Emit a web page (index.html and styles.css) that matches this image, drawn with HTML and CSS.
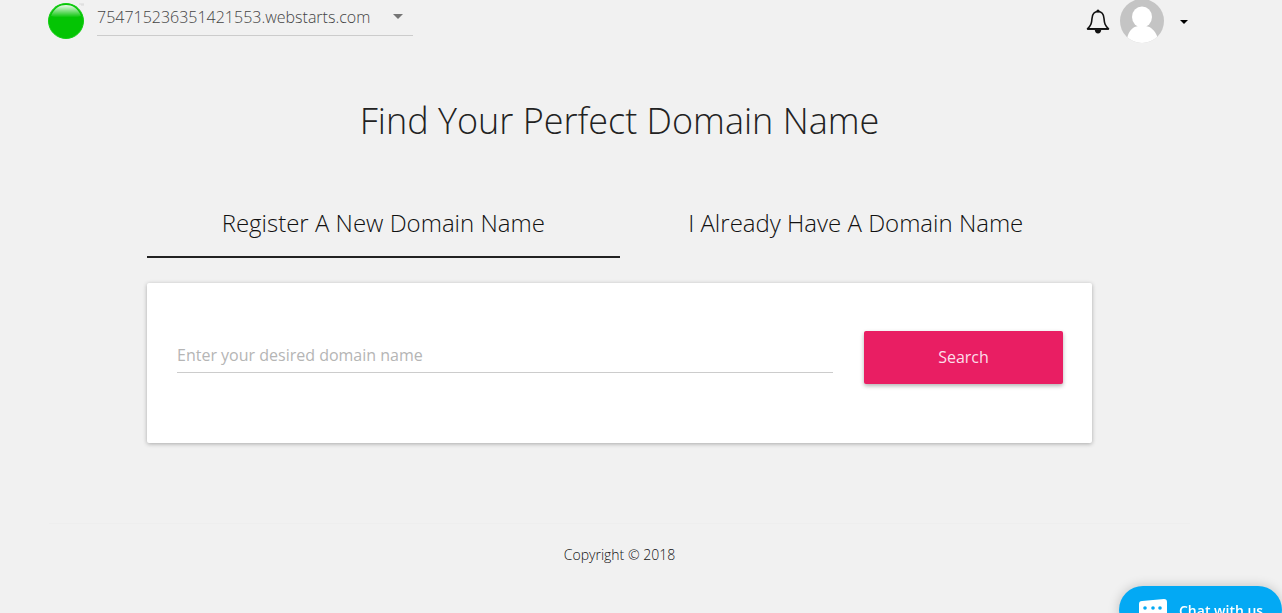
FILE: index.html
```
<!DOCTYPE html>
<html lang="en">
<head>
<meta charset="utf-8">
<title>Find Your Perfect Domain Name</title>
<link rel="stylesheet" href="styles.css">
</head>
<body>
<header class="topbar">
  <svg class="status" viewBox="0 0 38 40" role="img" aria-label="Online">
    <defs>
      <linearGradient id="shine" x1="0" y1="0" x2="0" y2="1"><stop offset="0" stop-color="#fff" stop-opacity=".92"/><stop offset="1" stop-color="#fff" stop-opacity="0"/></linearGradient>
    </defs>
    <circle cx="19" cy="21" r="17.5" fill="#04c404" stroke="#12cf12"/>
    <path d="M4 16C7 8 13 5 19 5s12 3 15 11c-4 2-26 2-30 0z" fill="url(#shine)"/>
    <path d="M32 4h5M34 5h3" stroke="#d9d9d9"/>
  </svg>
  <div class="site-picker">
    <select class="site" aria-label="Site"><option>754715236351421553.webstarts.com</option></select>
    <svg class="caret" viewBox="0 0 10 5" aria-hidden="true"><path d="M0 0h10L5 5z"/></svg>
  </div>
  <div class="account">
    <button class="icon-button" type="button" aria-label="Notifications"><svg class="bell" viewBox="0 0 24 26" aria-hidden="true"><circle cx="12" cy="3" r="1.600" fill="#111"/><path d="M12 3.500C8 3.500 6.300 6.500 6 10.500 5.600 15.500 5 17.500 1.500 20.800h21C19 17.500 18.400 15.500 18 10.500 17.700 6.500 16 3.500 12 3.500z" fill="none" stroke="#111" stroke-width="1.600" stroke-linejoin="round"/><path d="M1.200 21h21.600" stroke="#111" stroke-width="1.800"/><path d="M8.800 22h6.400c0 2-1.400 3.400-3.200 3.400S8.800 24 8.800 22z" fill="#111"/></svg></button>
    <button class="icon-button profile" type="button" aria-label="Account"><svg class="avatar" viewBox="0 0 44 44" aria-hidden="true"><defs><clipPath id="round"><circle cx="22" cy="21" r="22"/></clipPath></defs><g clip-path="url(#round)"><path fill="#c4c4c4" d="M0 0h44v44H0z"/><ellipse cx="22" cy="17" rx="10" ry="10.500" fill="#fff"/><path fill="#fff" d="M6 44c1-8 3-13 7-16 2-1.500 4-2 9-2s7 .5 9 2c4 3 7 8 8 16z"/></g></svg><svg class="small-caret" viewBox="0 0 8 4" aria-hidden="true"><path d="M0 0h8L4 4z"/></svg></button>
  </div>
</header>
<main class="content">
  <h1>Find Your Perfect Domain Name</h1>
  <nav class="tabs"><a class="tab active" href="#register">Register A New Domain Name</a><a class="tab" href="#existing">I Already Have A Domain Name</a></nav>
  <form class="card" id="register">
    <input class="domain" type="text" aria-label="Domain name" placeholder="Enter your desired domain name">
    <button class="search" type="button">Search</button>
  </form>
</main>
<footer class="footer">Copyright © 2018</footer>
<button class="chat" type="button"><svg class="bubble" viewBox="0 0 28 24" aria-hidden="true"><path fill="#fff" d="M3 2L25 0q3 0 3 3v13q0 3-3 3H10l-6 5v-5H3q-3 0-3-3V5q0-3 3-3z"/><g fill="#03a9f4"><circle cx="6" cy="9" r="1.800"/><circle cx="14" cy="9" r="1.800"/><circle cx="21" cy="9" r="1.800"/></g></svg><span>Chat with us</span></button>
</body>
</html>
```
FILE: styles.css
```
* { box-sizing: border-box; }
body { margin: 0; min-height: 100vh; overflow: hidden; background: #f1f1f1; color: #222; font-family: "Open Sans", sans-serif; font-weight: 300; }
button, input, select { font: inherit; color: inherit; border: 0; background: none; padding: 0; }
svg { display: block; }
.topbar { display: flex; align-items: flex-start; height: 44px; padding: 0 94px 0 47px; }
.status { width: 38px; height: 40px; }
.site-picker { display: flex; align-items: center; width: 316px; height: 36px; margin-left: 12px; padding-right: 10px; border-bottom: 1px solid #ccc; }
.site { flex: 1; min-width: 0; height: 34px; padding-bottom: 1px; appearance: none; font-size: 16px; color: #444; }
.caret { width: 10px; height: 5px; margin-bottom: 2px; fill: #757575; }
.account { display: flex; gap: 10px; margin-left: auto; }
.bell { width: 24px; height: 26px; margin-top: 8px; }
.icon-button { display: flex; align-items: flex-start; }
.profile { align-items: center; gap: 16px; }
.avatar { width: 44px; height: 44px; }
.small-caret { width: 8px; height: 4px; }
.content { margin: 0 190px 0 147px; }
h1 { margin: 50px 0 0; text-align: center; font-size: 36px; line-height: 54px; font-weight: 300; }
.tabs { display: flex; margin-top: 44px; }
.tab { flex: 1; height: 66px; padding-top: 12px; text-align: center; font-size: 24px; line-height: 38px; color: #111; text-decoration: none; }
.active { border-bottom: 2px solid #222; }
.card { display: flex; align-items: flex-start; gap: 31px; margin-top: 25px; padding: 48px 29px 59px 30px; background: #fff; border-radius: 2px; box-shadow: 0 1px 4px rgba(0,0,0,.3); }
.domain { flex: 1; min-width: 0; height: 42px; padding-top: 6px; border-bottom: 1px solid #ccc; font-size: 16px; font-weight: 400; }
.domain::placeholder { color: #b5b5b5; opacity: 1; }
.search { width: 199px; height: 53px; padding-bottom: 2px; border-radius: 2px; background: #e91e63; color: #fcdfe9; font-size: 16px; font-weight: 400; box-shadow: 0 2px 4px rgba(0,0,0,.3); }
.footer { margin: 80px 92px 0 49px; padding-top: 20px; border-top: 1px solid #eee; text-align: center; font-size: 14px; line-height: 22px; color: #111; }
.chat { position: fixed; right: 0; bottom: -21px; display: flex; gap: 12px; width: 163px; height: 48px; padding: 13px 0 0 20px; border-radius: 24px; background: #03a9f4; color: #fff; font-size: 14px; font-weight: 600; line-height: 24px; box-shadow: 0 0 12px rgba(0,0,0,.2); }
.bubble { width: 28px; height: 24px; }
```
